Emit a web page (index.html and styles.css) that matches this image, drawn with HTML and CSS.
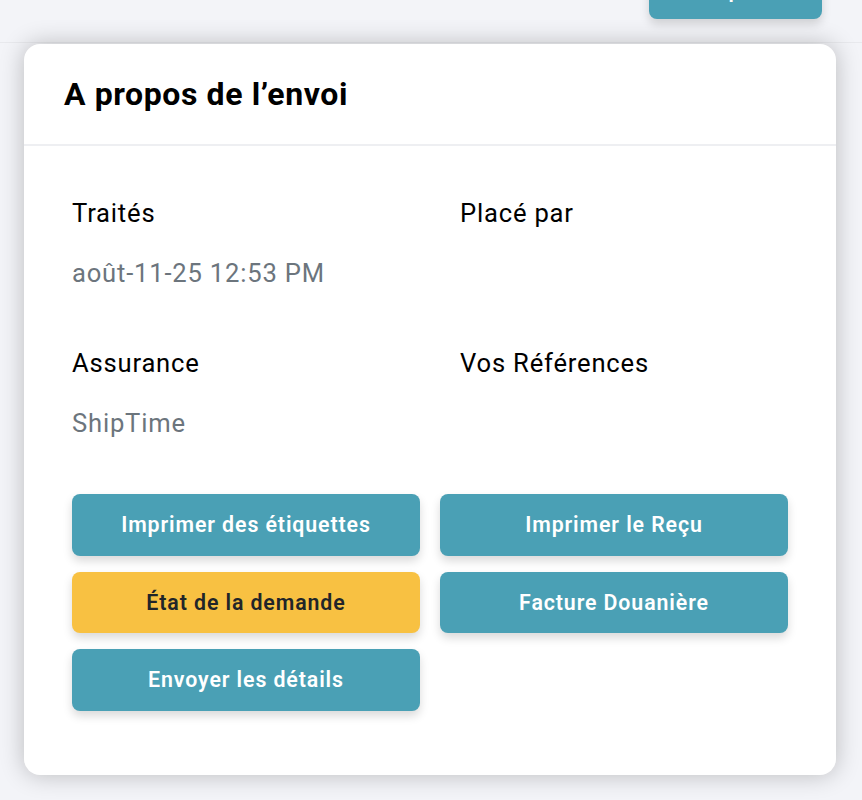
FILE: index.html
```html
<!DOCTYPE html>
<html lang="fr">
<head>
  <meta charset="UTF-8" />
  <meta name="viewport" content="width=device-width, initial-scale=1.0" />
  <title>A propos de l'envoi</title>
  <link rel="stylesheet" href="styles.css">
</head>
<body>
  <div class="top-bar">
    <button class="btn top-btn">
      <svg class="top-icon" width="18" height="18" viewBox="0 0 18 18"><circle cx="9" cy="9" r="7.5" fill="none" stroke="#fff" stroke-width="3"/></svg>
      <span>Imprimer</span>
    </button>
  </div>

  <div class="card">
    <div class="card-header">
      <h2>A propos de l’envoi</h2>
    </div>
    <div class="card-body">
      <div class="info-grid">
        <div class="info-item">
          <div class="info-label">Traités</div>
          <div class="info-value">août-11-25 12:53 PM</div>
        </div>
        <div class="info-item">
          <div class="info-label">Placé par</div>
          <div class="info-value"></div>
        </div>
        <div class="info-item">
          <div class="info-label">Assurance</div>
          <div class="info-value">ShipTime</div>
        </div>
        <div class="info-item">
          <div class="info-label">Vos Références</div>
          <div class="info-value"></div>
        </div>
      </div>
      <div class="btn-grid">
        <button class="btn">Imprimer des étiquettes</button>
        <button class="btn">Imprimer le Reçu</button>
        <button class="btn btn-yellow">État de la demande</button>
        <button class="btn">Facture Douanière</button>
        <button class="btn">Envoyer les détails</button>
      </div>
    </div>
  </div>
</body>
</html>
```
FILE: styles.css
```css
html, body {
  height: 800px;
  overflow: hidden;
}

body {
  margin: 0;
  background-color: #f3f4f8;
  font-family: Roboto, "Liberation Sans", sans-serif;
  color: #000;
}

.top-bar {
  height: 42px;
  border-bottom: 1px solid #e8e9ed;
  display: flex;
  justify-content: flex-end;
  padding-right: 40px;
}

.btn {
  height: 61.5px;
  background: #4aa0b5;
  color: #fff;
  border: none;
  border-radius: 8px;
  font-family: inherit;
  font-size: 21.33px;
  font-weight: 600;
  letter-spacing: 0.9px;
  box-shadow: 0 5px 10px rgba(0, 0, 0, 0.15);
}

.btn-yellow {
  background: #f8c142;
  color: #212529;
}

.top-btn {
  width: 173px;
  height: 50px;
  margin-top: -31px;
  padding: 0 0 10px;
  display: flex;
  align-items: center;
  justify-content: center;
  gap: 10px;
}

.card {
  margin: 1px 26px 0 24px;
  height: 731px;
  background: #fff;
  border-radius: 16px;
  box-shadow: 0 0 24px rgba(0, 0, 0, 0.24);
}

.card-header {
  height: 100px;
  border-bottom: 2px solid #eeeff2;
  padding-left: 40px;
  display: flex;
  align-items: center;
}

.card-header h2 {
  margin: 0;
  font-size: 32px;
  font-weight: 700;
  letter-spacing: 0.6px;
}

.card-body {
  padding: 49px 48px 0;
}

.info-grid {
  display: grid;
  grid-template-columns: 388px 1fr;
  row-gap: 54px;
}

.info-label {
  font-size: 25.6px;
  line-height: 36px;
  letter-spacing: 0.8px;
}

.info-value {
  margin-top: 24px;
  min-height: 36px;
  font-size: 25.6px;
  line-height: 36px;
  letter-spacing: 0.8px;
  color: #6c757d;
}

.btn-grid {
  margin-top: 53px;
  width: 716px;
  display: grid;
  grid-template-columns: 348px 348px;
  column-gap: 20px;
  row-gap: 16px;
}
```
